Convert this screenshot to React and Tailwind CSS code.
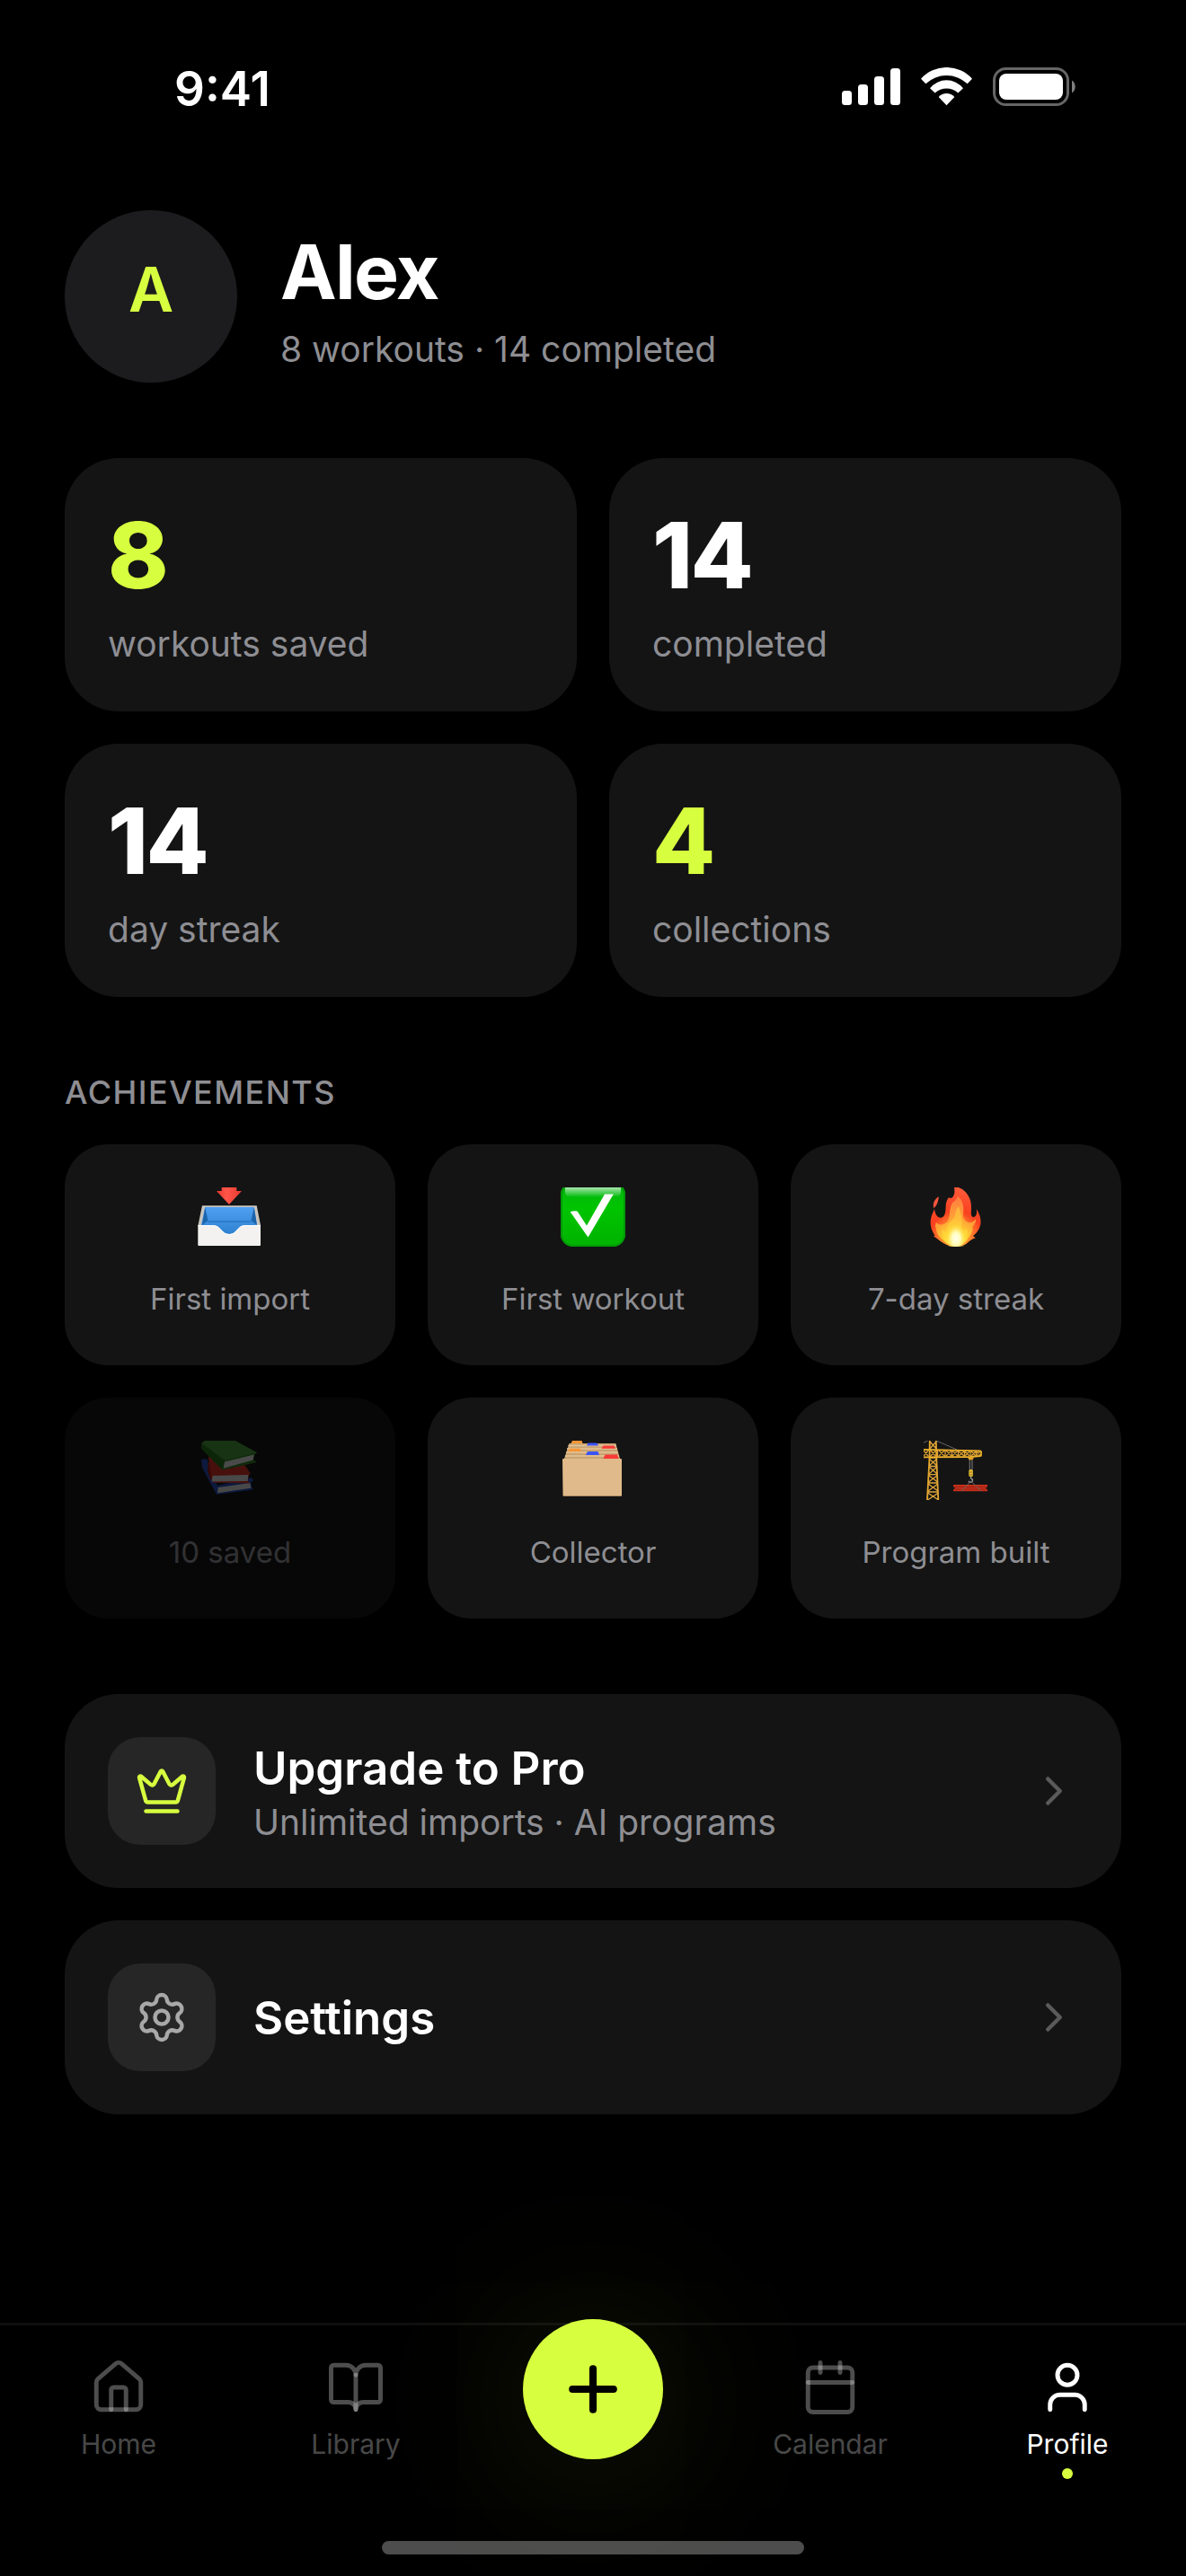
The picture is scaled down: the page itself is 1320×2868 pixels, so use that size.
import React from "react";
import {
  BookOpen,
  Calendar,
  ChevronRight,
  Crown,
  House,
  Plus,
  Settings,
  User,
} from "lucide-react";

function StatusIcons() {
  return (
    <svg width="261" height="43" viewBox="0 0 261 43" fill="#fff" role="img" aria-label="Signal, Wi-Fi and battery">
      <rect x="0" y="26" width="11" height="16" rx="3.5" />
      <rect x="18" y="19" width="11" height="23" rx="3.5" />
      <rect x="36" y="10" width="11" height="32" rx="3.5" />
      <rect x="54" y="1" width="11" height="41" rx="3.5" />
      <path d="M88 12.7A38.3 38.3 0 0 1 145 12.7L139.7 18.3A33.5 33.5 0 0 0 93.3 18.3Z" />
      <path d="M98 23.3A23.5 23.5 0 0 1 135 23.3L129.3 28.5A18.9 18.9 0 0 0 103.7 28.5Z" />
      <path d="M107.7 33A11.5 11.5 0 0 1 125.3 33L116.5 42.3Z" />
      <rect x="169.5" y="1.5" width="82" height="40" rx="13" fill="none" stroke="#fff" strokeOpacity=".4" strokeWidth="3" />
      <rect x="175" y="7" width="71" height="29" rx="8" />
      <path d="M256 14.5A8.5 8.5 0 0 1 256 28.5Z" fillOpacity=".5" />
    </svg>
  );
}

function InboxArt() {
  return (
    <svg width="72" height="66" viewBox="0 0 72 66" aria-hidden="true">
      <defs>
        <linearGradient id="tray-in" x1="0" y1="0" x2="0" y2="1">
          <stop offset="0" stopColor="#4f9ff2" />
          <stop offset="1" stopColor="#2c80cf" />
        </linearGradient>
        <linearGradient id="tray-arrow" x1="0" y1="0" x2="1" y2="0">
          <stop offset="0" stopColor="#e8382f" />
          <stop offset=".4" stopColor="#ff564a" />
          <stop offset="1" stopColor="#e8382f" />
        </linearGradient>
      </defs>
      <path d="M26.7 0H43.3V4H49L35 19L21 4H26.7Z" fill="url(#tray-arrow)" />
      <path d="M5 20.3H65.7L70 42V64Q70 65 69 65H1.5Q.5 65 .5 64V42Z" fill="#c9c5be" />
      <path d="M8.2 22H62.8L66 42V54H4V42Z" fill="url(#tray-in)" />
      <path d="M8.2 22L11.5 37L5 42Z" fill="#1c65ad" />
      <path d="M62.8 22L59.5 37L66 42Z" fill="#1c65ad" />
      <path d="M11.5 38H59.5" stroke="#1f6cb5" strokeWidth="1" />
      <path d="M.5 42H17C26 42 26 52 35.2 52C44 52 44 42 53 42H70V64Q70 65 69 65H1.5Q.5 65 .5 64Z" fill="#f3f2f0" />
      <path d="M.5 42.5H17C26 42.5 26 52.5 35.2 52.5C44 52.5 44 42.5 53 42.5H70" fill="none" stroke="#fff" />
    </svg>
  );
}

function CheckArt() {
  return (
    <svg width="72" height="66" viewBox="0 0 72 66" aria-hidden="true">
      <defs>
        <linearGradient id="check-bg" x1="0" y1="0" x2="0" y2="1">
          <stop offset="0" stopColor="#00b312" />
          <stop offset=".4" stopColor="#00c400" />
          <stop offset="1" stopColor="#00b200" />
        </linearGradient>
        <linearGradient id="check-gloss" x1="0" y1="0" x2="0" y2="1">
          <stop offset="0" stopColor="#fff" stopOpacity=".65" />
          <stop offset="1" stopColor="#fff" stopOpacity="0" />
        </linearGradient>
      </defs>
      <rect x="0" y="-6" width="72" height="72" rx="14" fill="url(#check-bg)" />
      <rect x="1" y="-5" width="70" height="70" rx="13" fill="none" stroke="#009a08" strokeWidth="2" />
      <path d="M5 0H67V5Q67 11 60 11H12Q5 11 5 5Z" fill="url(#check-gloss)" />
      <path d="M10.7 27.2Q14 25.6 18.5 26.5L29 42.5L49 7.5H58.8L30.5 55.5Z" fill="#fff" />
    </svg>
  );
}

function FireArt() {
  return (
    <svg width="72" height="66" viewBox="0 0 72 66" aria-hidden="true">
      <defs>
        <radialGradient id="fire-out" gradientUnits="userSpaceOnUse" cx="36" cy="56" r="54">
          <stop offset="0" stopColor="#ffc833" />
          <stop offset=".35" stopColor="#ff7a2c" />
          <stop offset=".55" stopColor="#f94020" />
          <stop offset="1" stopColor="#ff5a38" />
        </radialGradient>
        <radialGradient id="fire-in" gradientUnits="userSpaceOnUse" cx="36" cy="62" r="50">
          <stop offset="0" stopColor="#fff38a" />
          <stop offset=".25" stopColor="#ffd633" />
          <stop offset=".55" stopColor="#ffa236" />
          <stop offset="1" stopColor="#ff8040" />
        </radialGradient>
        <radialGradient id="fire-core">
          <stop offset="0" stopColor="#fffff0" />
          <stop offset=".45" stopColor="#fffbb8" />
          <stop offset="1" stopColor="#ffe23e" stopOpacity="0" />
        </radialGradient>
      </defs>
      <path d="M16.7 10.3C12 13 10 18 11 23C14 22 16.5 16 16.7 10.3Z" fill="#f4553d" />
      <path d="M34 0H38.7C45 2 49 7 51.5 13C54 20 52.5 26 53 30.7C53.5 33 55.3 33 55.3 33C58 33 60 30 58.7 24C62 29 64.5 36 63.3 41C62.5 46 59 51 55 54L57.7 56.3C54 57 51 60 47 63.3C43 65 39 66 35.7 66C31 66 27 65 23.7 63C20 61 17 59 15.3 57.3L10.7 54L12.7 53.7C8 47 7 41 8 35C9 30 11 27 12 24C12.5 29 15 34 19.3 33.7C24 33 24.5 27 24.7 20C25 16 26.5 13 28 11.3C30 12.5 32 12 32.7 10.3C35 7 34.5 3 34 0Z" fill="url(#fire-out)" />
      <path d="M38 10C44 14 45 22 44 30C44 36 48 40 53 39C55 38 57 37 58 35C59 39 56 41 54 45C57 46 51 55 47 60Q42 65 35.7 65.5Q27 65 21 58C15 53 14 49 14 46Q12 43 14 39C17 43 24 42 27 37C30 31 28 24 32 17Q36 15 38 10Z" fill="url(#fire-in)" />
      <path d="M39 21C34 25 37 32 32 36C27 40 26 44 25 50C22 49 21 46 21 45Q19 53 24 59Q36 66 47 58C50 52 49 48 48 45C47 48 45 49 43 47C41 42 44 39 42 34Q42 30 39 21Z" fill="#ffdf40" fillOpacity=".45" />
      <ellipse cx="36" cy="57" rx="11" ry="16" fill="url(#fire-core)" />
    </svg>
  );
}

function BooksArt() {
  return (
    <svg width="72" height="66" viewBox="0 0 72 66" aria-hidden="true">
      <path d="M4 21L10 20L22 50L60 41L62 44L59 47L61.5 54.5L21 60L5 30Z" fill="#2548b0" />
      <path d="M22.7 52L58.3 47L59.3 52.7L22 58.2Z" fill="#cfcfcf" />
      <path d="M12 17.7L51.7 26L59 36.7L56.7 38L56 45L58.3 47.2L17.3 46.8L13.3 38Z" fill="#cc3024" />
      <path d="M12 20L15 38L14.5 46L11 33Z" fill="#8f1a14" />
      <path d="M16.7 39L56.5 38L55.7 45L15.5 45.5Z" fill="#d0d0d0" />
      <path d="M8.3 0H41.7L66 13.3L63 16L62 21L66 24L27.7 32.6L4.3 9L4 2.7Z" fill="#2c7a22" />
      <path d="M8.3 0H41.7L66 13.3L30 22L4.5 2.7Z" fill="#459238" />
      <path d="M4 2.7L30 22L27.7 32.6L4.3 9Z" fill="#226a1a" />
      <path d="M30 23.5L62.7 15.5L61.7 21.5L28.7 30.8Z" fill="#d4d4d4" />
    </svg>
  );
}

function FolderArt() {
  return (
    <svg width="72" height="66" viewBox="0 0 72 66" aria-hidden="true">
      <path d="M9.5 3H61.3L66 20V24H4V20Z" fill="#c9a473" />
      <path d="M11.5 3L13 0H23.5L24.5 3Z" fill="#f79634" />
      <path d="M8.5 5.5H62M7 9H63M6 13H64M5 17H65" stroke="#e6c496" strokeWidth="1.5" />
      <path d="M29 5.4L30.5 2.5H40.5L42 5.4Z" fill="#3b55f5" />
      <path d="M45.4 8.7L47.5 5.4H59.5L61 8.7Z" fill="#f93a36" />
      <path d="M8.2 12L10 8.7H21.5L23 12Z" fill="#f79634" />
      <path d="M27.8 16L30 12H41.5L43 16Z" fill="#3b55f5" />
      <path d="M47.4 20L49.5 15.6H63L64.6 20Z" fill="#f93a36" />
      <path d="M2 21Q2 20 3 20H67Q68 20 68 21V60.5Q68 62 66.5 62H4Q2.5 62 2.5 60.5Z" fill="#e0ba8a" />
      <path d="M3 61.5H67" stroke="#b08c5e" />
    </svg>
  );
}

function CraneArt() {
  return (
    <svg width="72" height="66" viewBox="0 0 72 66" fill="none" aria-hidden="true">
      <path d="M14 0L37 10M4.7 0L0 2.3" stroke="#66666a" />
      <path d="M6.8 0L6.5 19L4 66M13.8 0L14.2 19L16.3 66" stroke="#e8a92e" strokeWidth="1.8" />
      <path d="M7 1L14 9M14 1L7 9M6 20L15 28M15 20L6 28M6 29L15 37M15 29L6 37M5.5 38.5L15.5 46M15.5 38.5L5.5 46M5 48L16 56M16 48L5 56M4.5 58L16.5 66M16.5 58L4.5 66M6 19H15M6 28.5H15M5.5 37.7H15.5M5 47H16M4.5 57H16.5" stroke="#e0a63a" strokeWidth="1.3" />
      <path d="M0 9.8L63 11.3Q64 11.5 64 12.5V16Q64 17 63 17L52 18L0 18.3" stroke="#f0b429" strokeWidth="1.8" />
      <path d="M0 11L5 17M5 11L0 17M7 10L14 18M14 10L7 18M17 11L23 17M23 11L17 17M25 11L31 17M31 11L25 17M32 11L38 17M38 11L32 17M39 12L45 17M45 12L39 17M46 12L51 17M51 12L46 17M53 12L58 17M58 12L53 17M59 12L63 16M63 12L59 16M15.5 10V18M24 10V18M31.5 11V18M38.5 11V18M45.5 11V18M52 11V18M58.5 11V17" stroke="#dba032" strokeWidth="1.3" />
      <path d="M49 18.5H56L54.5 21.5H50.5Z" fill="#e0a22c" />
      <path d="M51.3 22V32M54 22V32" stroke="#77777b" strokeWidth="1.1" />
      <rect x="50.3" y="32" width="4.6" height="8" rx="1.5" fill="#e6bd33" />
      <path d="M51 35H54.5M51 38H54.5" stroke="#7d6420" strokeWidth=".8" />
      <path d="M52.6 40V42Q55.5 43 54 45.5Q51.5 47.5 50 45" stroke="#909094" strokeWidth="1.5" />
      <path d="M33 49H71V51.5H69.5V54H71V56.3H33V54H34.5V51.5H33Z" fill="#c8301c" />
      <path d="M34 51.5H70M34 54H70" stroke="#8e1f10" strokeWidth=".9" />
      <path d="M52.7 45L42 56M52.7 45L64 56" stroke="#6f6664" />
    </svg>
  );
}

const stats = [
  { value: "8", label: "workouts saved", accent: true },
  { value: "14", label: "completed", accent: false },
  { value: "14", label: "day streak", accent: false },
  { value: "4", label: "collections", accent: true },
];

const achievements = [
  { label: "First import", Art: InboxArt },
  { label: "First workout", Art: CheckArt },
  { label: "7-day streak", Art: FireArt },
  { label: "10 saved", Art: BooksArt, locked: true },
  { label: "Collector", Art: FolderArt },
  { label: "Program built", Art: CraneArt },
];

function ActionRow({ Icon, iconClass, title, detail }) {
  return (
    <button
      type="button"
      className="flex w-full items-center gap-[42px] rounded-[60px] bg-[#141414] p-12 text-left"
    >
      <span className={`grid size-[120px] shrink-0 place-items-center rounded-[36px] bg-[#262626] ${iconClass}`}>
        <Icon size={60} strokeWidth={1.8} />
      </span>
      <span className="flex flex-1 flex-col">
        <span className="text-[51px] leading-[69px] font-semibold">{title}</span>
        {detail && <span className="text-[39px] leading-[51px] text-[#8e8e93]">{detail}</span>}
      </span>
      <ChevronRight size={54} strokeWidth={2} className="shrink-0 text-white/30" />
    </button>
  );
}

function Tab({ Icon, label, active }) {
  return (
    <a
      href={`#${label.toLowerCase()}`}
      aria-current={active ? "page" : undefined}
      className={`flex flex-1 flex-col items-center ${active ? "text-white" : "text-white/30"}`}
    >
      <Icon size={66} strokeWidth={1.8} />
      <span className="mt-3 text-[30px] leading-9">{label}</span>
      {active && <span className="mt-[9px] size-3 rounded-full bg-[#d7ff3f]" />}
    </a>
  );
}

export default function App() {
  return (
    <div className="flex min-h-screen flex-col overflow-hidden bg-black font-['Inter',sans-serif] text-white">
      <header className="flex h-[234px] items-start justify-between pt-[66px] pr-[122px] pl-[194px]">
        <time className="text-[53px] leading-[66px] font-semibold">9:41</time>
        <div className="pt-[9px]">
          <StatusIcons />
        </div>
      </header>

      <main className="flex flex-1 flex-col px-[72px]">
        <section className="flex items-center gap-12">
          <div className="grid size-48 shrink-0 place-items-center rounded-full bg-[#1c1c1e] pb-4 text-[69px] leading-[84px] font-semibold text-[#d7ff3f]">
            A
          </div>
          <div className="flex flex-col gap-[3px]">
            <h1 className="text-[84px] leading-[114px] font-bold tracking-[-0.02em]">Alex</h1>
            <p className="text-[39px] leading-[51px] text-[#8e8e93]">8 workouts · 14 completed</p>
          </div>
        </section>

        <section className="mt-[84px] grid grid-cols-2 gap-9">
          {stats.map(({ value, label, accent }) => (
            <div key={label} className="flex flex-col gap-3 rounded-[60px] bg-[#141414] p-12">
              <span
                className={`text-[102px] leading-[120px] font-extrabold tracking-tight ${accent ? "text-[#d7ff3f]" : "text-white"}`}
              >
                {value}
              </span>
              <span className="text-[39px] leading-[54px] text-[#8e8e93]">{label}</span>
            </div>
          ))}
        </section>

        <h2 className="mt-[84px] text-[36px] leading-[44px] font-medium tracking-[0.04em] text-[#8e8e93] uppercase">
          Achievements
        </h2>
        <ul className="mt-9 grid grid-cols-3 gap-9">
          {achievements.map(({ label, Art, locked }) => (
            <li
              key={label}
              className={`flex flex-col items-center gap-[33px] rounded-[48px] bg-[#141414] p-12 ${locked ? "opacity-35" : ""}`}
            >
              <Art />
              <span className="text-[33px] leading-[51px] whitespace-nowrap text-[#8e8e93]">{label}</span>
            </li>
          ))}
        </ul>

        <section className="mt-[84px] flex flex-col gap-9">
          <ActionRow
            Icon={Crown}
            iconClass="text-[#d7ff3f]"
            title="Upgrade to Pro"
            detail="Unlimited imports · AI programs"
          />
          <ActionRow Icon={Settings} iconClass="text-[#a8a8a8]" title="Settings" />
        </section>
      </main>

      <footer className="border-t-[3px] border-white/[0.06] pt-9 pb-6">
        <nav className="flex h-[204px] items-start">
          <Tab Icon={House} label="Home" />
          <Tab Icon={BookOpen} label="Library" />
          <div className="flex flex-1 justify-center">
            <button
              type="button"
              aria-label="Add workout"
              className="-mt-[43px] grid size-[156px] place-items-center rounded-full bg-[#d7ff3f] text-black shadow-[0_12px_200px_rgba(215,255,63,0.16)]"
            >
              <Plus size={78} strokeWidth={2.5} />
            </button>
          </div>
          <Tab Icon={Calendar} label="Calendar" />
          <Tab Icon={User} label="Profile" active />
        </nav>
        <div className="mx-auto h-[15px] w-[470px] rounded-full bg-[#4d4d4d]" />
      </footer>
    </div>
  );
}
